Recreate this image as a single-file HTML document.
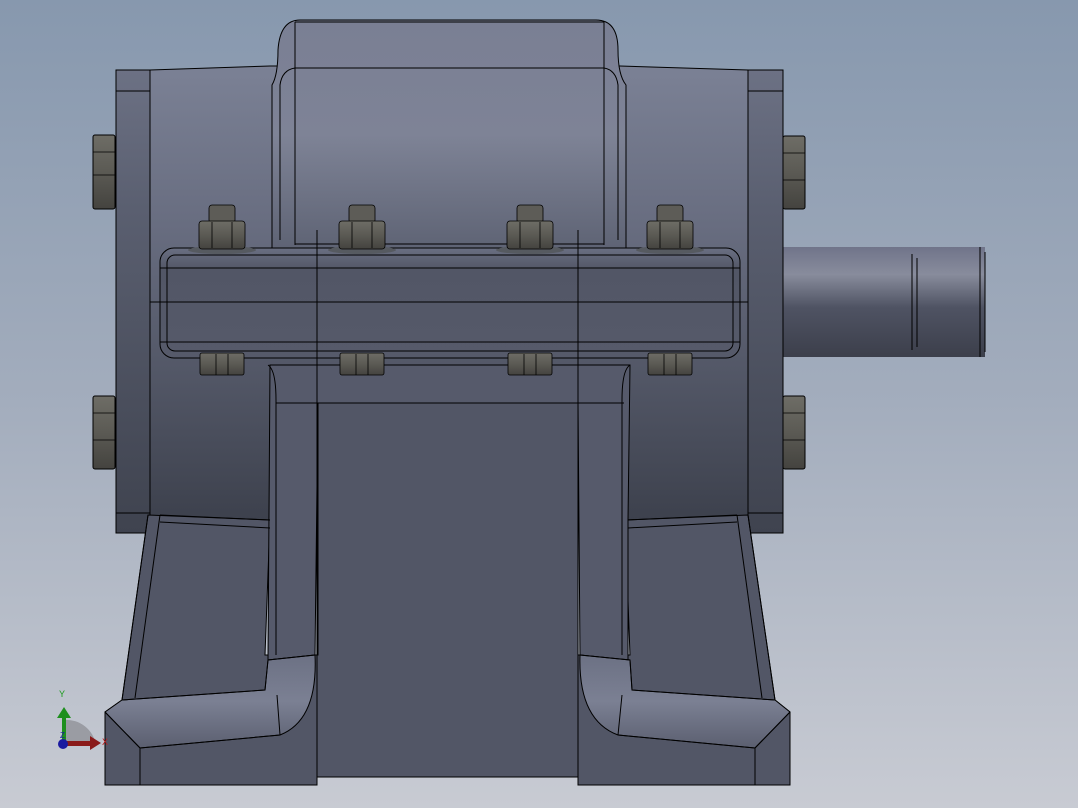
<!DOCTYPE html>
<html><head><meta charset="utf-8"><style>html,body{margin:0;padding:0;width:1078px;height:808px;overflow:hidden}svg{display:block}</style></head>
<body>
<svg width="1078" height="808" viewBox="0 0 1078 808" xmlns="http://www.w3.org/2000/svg">
<defs>
<linearGradient id="bg" x1="0" y1="0" x2="0" y2="1"><stop offset="0" stop-color="#8798ae"/><stop offset="0.5" stop-color="#a3adbd"/><stop offset="1" stop-color="#c8cbd3"/></linearGradient>
<linearGradient id="house" x1="0" y1="0" x2="0" y2="1"><stop offset="0" stop-color="#7b8195"/><stop offset="0.35" stop-color="#686d80"/><stop offset="1" stop-color="#3d414d"/></linearGradient>
<linearGradient id="flg" x1="0" y1="0" x2="0" y2="1"><stop offset="0" stop-color="#6c7184"/><stop offset="0.3" stop-color="#5a5f70"/><stop offset="1" stop-color="#3f434f"/></linearGradient>
<linearGradient id="top" x1="0" y1="0" x2="0" y2="1"><stop offset="0" stop-color="#7a7f94"/><stop offset="0.5" stop-color="#7e8396"/><stop offset="1" stop-color="#5e6374"/></linearGradient>
<linearGradient id="band" x1="0" y1="0" x2="0" y2="1"><stop offset="0" stop-color="#6a6f82"/><stop offset="0.2" stop-color="#525666"/><stop offset="1" stop-color="#565a6a"/></linearGradient>
<linearGradient id="shaft" x1="0" y1="0" x2="0" y2="1"><stop offset="0" stop-color="#70748a"/><stop offset="0.25" stop-color="#888c9c"/><stop offset="0.55" stop-color="#4f5363"/><stop offset="1" stop-color="#3c3f4b"/></linearGradient>
<linearGradient id="nut" x1="0" y1="0" x2="0" y2="1"><stop offset="0" stop-color="#6e6d66"/><stop offset="0.5" stop-color="#5b5a54"/><stop offset="1" stop-color="#44433f"/></linearGradient>
<linearGradient id="foot" x1="0" y1="0" x2="0" y2="1"><stop offset="0" stop-color="#6c7184"/><stop offset="0.5" stop-color="#7b8093"/><stop offset="1" stop-color="#5b5f70"/></linearGradient>
<g id="b1" stroke="#000" stroke-width="0.8"><ellipse cx="0" cy="250" rx="34" ry="4" fill="#565a60" stroke="none"/><rect x="-13" y="205" width="26" height="18" rx="3" fill="#5d5c57"/><rect x="-23" y="221" width="46" height="28" rx="3" fill="url(#nut)"/><line x1="-10" y1="222" x2="-10" y2="248"/><line x1="10" y1="222" x2="10" y2="248"/><rect x="-22" y="353" width="44" height="22" rx="2" fill="url(#nut)"/><line x1="-6" y1="354" x2="-6" y2="375"/><line x1="6" y1="354" x2="6" y2="375"/></g>
</defs>
<rect width="1078" height="808" fill="url(#bg)"/>
<g stroke="#000" stroke-width="1">
<rect x="783" y="247" width="202" height="110" fill="url(#shaft)" stroke="none"/>
<line x1="912" y1="254" x2="912" y2="350"/><line x1="917" y1="258" x2="917" y2="347"/><line x1="980" y1="247" x2="980" y2="357"/><line x1="985" y1="252" x2="985" y2="352"/>
<g fill="url(#nut)">
<rect x="93" y="135" width="22" height="74" rx="2"/><rect x="93" y="396" width="22" height="73" rx="2"/>
<rect x="783" y="136" width="22" height="73" rx="2"/><rect x="783" y="396" width="22" height="73" rx="2"/>
</g>
<g stroke-width="0.8"><line x1="93" y1="152" x2="115" y2="152"/><line x1="93" y1="175" x2="115" y2="175"/><line x1="93" y1="413" x2="115" y2="413"/><line x1="93" y1="440" x2="115" y2="440"/><line x1="783" y1="153" x2="805" y2="153"/><line x1="783" y1="180" x2="805" y2="180"/><line x1="783" y1="413" x2="805" y2="413"/><line x1="783" y1="440" x2="805" y2="440"/></g>
<path d="M150 70 L270 66 L620 66 L748 70 L748 520 L150 520 Z" fill="url(#house)"/>
<rect x="116" y="70" width="34" height="463" fill="url(#flg)"/>
<rect x="748" y="70" width="35" height="463" fill="url(#flg)"/>
<line x1="116" y1="91" x2="150" y2="91"/><line x1="748" y1="91" x2="783" y2="91"/>
<line x1="116" y1="513" x2="150" y2="513"/><line x1="748" y1="513" x2="783" y2="513"/>
<path d="M272 250 L272 85 Q278 75 278 50 Q280 20 300 20 L596 20 Q618 20 618 50 Q618 75 626 85 L626 250 Z" fill="url(#top)"/>
<line x1="295" y1="22" x2="295" y2="245"/><line x1="604" y1="22" x2="604" y2="245"/>
<line x1="295" y1="22" x2="604" y2="22"/><line x1="295" y1="68" x2="604" y2="68"/>
<path d="M295 68 Q282 70 280 85 L280 240" fill="none"/><path d="M604 68 Q616 70 618 85 L618 240" fill="none"/>
<line x1="295" y1="244" x2="604" y2="244"/>
<path d="M148 515 L270 520 L265 655 L318 655 L318 403 L578 403 L578 655 L630 655 L625 520 L748 515 L775 700 L790 712 L790 785 L578 785 L578 777 L317 777 L317 785 L105 785 L105 712 L122 700 Z" fill="#525666"/>
<path d="M270 365 L630 365 L628 520 L628 660 L580 655 L578 403 L318 403 L315 655 L268 660 Z" fill="#565a6b"/>
<line x1="276" y1="403" x2="624" y2="403"/>
<line x1="317" y1="403" x2="317" y2="777"/><line x1="578" y1="403" x2="578" y2="777"/>
<path d="M268 365 Q276 370 276 400 L276 655" fill="none"/><path d="M630 365 Q622 370 622 400 L622 655" fill="none"/>
<path d="M148 515 L122 700" fill="none"/><path d="M160 515 L135 698" fill="none"/>
<path d="M748 515 L775 700" fill="none"/><path d="M737 515 L762 698" fill="none"/>
<path d="M160 515 L270 520 M160 522 L270 528" fill="none"/>
<path d="M737 515 L628 520 M737 522 L628 528" fill="none"/>
<path d="M105 712 L122 700 L265 690 L268 660 L315 655 Q318 720 280 735 L140 748 Z" fill="url(#foot)"/>
<path d="M790 712 L775 700 L632 690 L630 660 L580 655 Q578 720 618 735 L755 748 Z" fill="url(#foot)"/>
<path d="M122 700 L265 690 M140 748 L280 735 M105 712 L140 748 L140 785 M265 690 L268 660 M268 660 L315 655 M280 735 L277 695" fill="none"/>
<path d="M775 700 L632 690 M755 748 L618 735 M790 712 L755 748 L755 785 M632 690 L630 660 M630 660 L580 655 M618 735 L622 695" fill="none"/>
<path d="M105 712 L105 785 L317 785 L317 777 L578 777 L578 785 L790 785 L790 712" fill="none"/>
<rect x="160" y="248" width="580" height="110" rx="14" fill="url(#band)"/>
<rect x="167" y="255" width="566" height="96" rx="8" fill="none"/>
<line x1="150" y1="302" x2="748" y2="302"/>
<line x1="317" y1="230" x2="317" y2="403"/><line x1="578" y1="230" x2="578" y2="403"/>
<line x1="160" y1="268" x2="740" y2="268"/><line x1="160" y1="342" x2="740" y2="342"/>
</g>
<use href="#b1" x="222"/><use href="#b1" x="362"/><use href="#b1" x="530"/><use href="#b1" x="670"/>
<path d="M64 745 L64 720 A30 30 0 0 1 96 745 Z" fill="#9a9ca3"/>
<rect x="62" y="716" width="4" height="28" fill="#1d8f1d"/><path d="M57 718 L64 707 L71 718 Z" fill="#1d8f1d"/>
<rect x="64" y="741" width="27" height="5" fill="#8a1a1a"/><path d="M90 736 L101 743 L90 750 Z" fill="#8a1a1a"/>
<circle cx="63" cy="744" r="5" fill="#1a1aa0"/>
<text x="59" y="697" font-family="Liberation Sans, sans-serif" font-size="9" fill="#1a9a1a">Y</text>
<text x="102" y="745" font-family="Liberation Sans, sans-serif" font-size="9" fill="#c01a1a">X</text>
<text x="60" y="738" font-family="Liberation Sans, sans-serif" font-size="8" fill="#1a1aa0">Z</text>
</svg>
</body></html>
